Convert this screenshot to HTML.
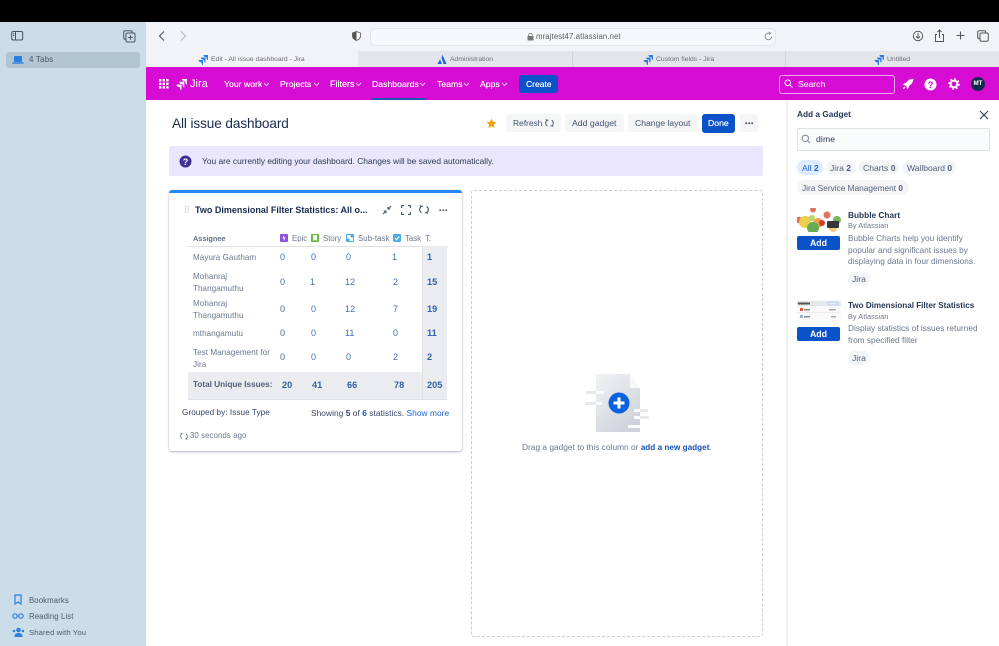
<!DOCTYPE html>
<html><head><meta charset="utf-8"><title>All issue dashboard</title>
<style>
html,body{margin:0;padding:0;background:#fff}
#r{position:relative;width:999px;height:646px;overflow:hidden;font-family:"Liberation Sans",sans-serif;background:#fff;filter:blur(.3px)}
.b,.t,svg{position:absolute}
.t{white-space:nowrap;line-height:12px;font-size:8.3px;color:#505f79}
.nav{color:#fff;font-size:8.7px;top:78px;text-shadow:0 0 .4px #fff}
.n{color:#3f6fae;font-size:9px;letter-spacing:.1px}
.nb{color:#2f62a5;font-size:9.2px;font-weight:bold}
.btn{position:absolute;background:#f4f5f7;border-radius:3px;height:18px;top:114px}
.tab{color:#6a6d75;font-size:6.8px;top:54px}
.chip{position:absolute;background:#f4f5f7;border-radius:8px;height:15px}
.p{font-size:8.300px;color:#6b778c;line-height:11.700px;letter-spacing:0}
</style></head><body><div id="r">
<div class="b" style="left:0;top:0;width:999px;height:22px;background:#000"></div>
<div class="b" style="left:0;top:22px;width:146px;height:624px;background:#cbdde9"></div>
<div class="b" style="left:146px;top:22px;width:853px;height:29px;background:#f2f3f8"></div>
<div class="b" style="left:146px;top:51px;width:212px;height:16px;background:#f2f3f8"></div>
<div class="b" style="left:358px;top:51px;width:641px;height:16px;background:#e4e5ea"></div>
<div class="b" style="left:572px;top:51px;width:1px;height:16px;background:#d3d4da"></div>
<div class="b" style="left:785px;top:51px;width:1px;height:16px;background:#d3d4da"></div>
<div class="b" style="left:146px;top:67px;width:853px;height:33px;background:#d60bd4"></div>
<div class="b" style="left:371px;top:98px;width:55px;height:2px;background:#1b55b8"></div>

<!-- sidebar -->
<svg style="left:11px;top:30px" width="13" height="12" fill="none" stroke="#4a5560" stroke-width="1"><rect x=".7" y="1.500" width="11" height="8.500" rx="1.500"/><path d="M4.500 1.500v8.500M2 3.700h1.300M2 5.500h1.300"/></svg>
<svg style="left:123px;top:30px" width="13" height="13" fill="none" stroke="#4a5560" stroke-width="1"><rect x=".7" y=".7" width="8.500" height="8.500" rx="1.500"/><rect x="3" y="3" width="9" height="9" rx="1.500" fill="#cbdde9"/><path d="M7.500 5.200v4.600M5.200 7.500h4.600"/></svg>
<div class="b" style="left:6px;top:52px;width:134px;height:16px;background:#b2c5d2;border-radius:3px"></div>
<svg style="left:12px;top:55px" width="12" height="10" fill="none"><rect x="2" y="1" width="8" height="6" rx="1" fill="#2b7de0"/><path d="M.5 8h11" stroke="#2b7de0" stroke-width="1.400"/></svg>
<div class="t" style="left:29px;top:54px;font-size:8px;color:#4e5a64;letter-spacing:.15px">4 Tabs</div>
<svg style="left:14px;top:594px" width="8" height="11" fill="none" stroke="#2b80e0" stroke-width="1.200"><path d="M1 1h6v9L4 8 1 10z"/></svg>
<svg style="left:12px;top:612px" width="12" height="8" fill="none" stroke="#2b80e0" stroke-width="1.100"><circle cx="3" cy="4" r="2.200"/><circle cx="9" cy="4" r="2.200"/><path d="M5 4h2"/></svg>
<svg style="left:12px;top:627px" width="12" height="11" fill="#2b80e0"><circle cx="6.500" cy="3" r="2.300"/><path d="M2.500 10c0-3 1.500-4 4-4s4 1 4 4z"/><circle cx="2" cy="4" r="1.300"/><circle cx="11" cy="4" r="1.300"/></svg>
<div class="t" style="left:29px;top:595px;font-size:7.800px;color:#4e5a64;letter-spacing:.1px">Bookmarks</div>
<div class="t" style="left:29px;top:611px;font-size:7.800px;color:#4e5a64;letter-spacing:.1px">Reading List</div>
<div class="t" style="left:29px;top:627px;font-size:7.700px;color:#4e5a64;letter-spacing:.1px">Shared with You</div>

<!-- toolbar -->
<svg style="left:158px;top:30px" width="8" height="12" fill="none" stroke="#4a4d55" stroke-width="1.100"><path d="M6 1.500 1.500 6 6 10.500"/></svg>
<svg style="left:179px;top:30px" width="8" height="12" fill="none" stroke="#b5b7bd" stroke-width="1.100"><path d="M2 1.500 6.500 6 2 10.500"/></svg>
<svg style="left:352px;top:31px" width="9" height="10"><path d="M4.500.5 8.500 2v3c0 2.300-2 3.700-4 4.500C2.500 8.700.5 7.300.5 5V2z" fill="#fff" stroke="#555" stroke-width=".8"/><path d="M4.500.5V9.500C2.500 8.700.5 7.300.5 5V2z" fill="#555"/></svg>
<div class="b" style="left:370px;top:28px;width:404px;height:16px;background:#f6f7fb;border:1px solid #e3e4ea;border-radius:5px"></div>
<svg style="left:527px;top:33px" width="7" height="8" fill="#777"><rect x=".5" y="3" width="6" height="4.500" rx=".6"/><path d="M1.700 3V2a1.800 1.800 0 0 1 3.600 0v1" fill="none" stroke="#777" stroke-width=".8"/></svg>
<div class="t" style="left:536px;top:31px;font-size:7.800px;color:#5c5f67;letter-spacing:.1px">mrajtest47.atlassian.net</div>
<svg style="left:764px;top:31px" width="9" height="10" fill="none" stroke="#888" stroke-width=".9"><path d="M7.700 5.500A3.300 3.300 0 1 1 4.500 2.200H6M5 .8 6.500 2.200 5 3.600"/></svg>
<svg style="left:912px;top:30px" width="12" height="12" fill="none" stroke="#555" stroke-width="1"><circle cx="6" cy="6" r="4.700"/><path d="M6 3v5M4 6.300 6 8.300 8 6.300"/></svg>
<svg style="left:934px;top:29px" width="11" height="14" fill="none" stroke="#555" stroke-width="1"><path d="M3 5.500H1.500v7h8v-7H8M5.500 9V1M3.500 3l2-2 2 2"/></svg>
<svg style="left:955px;top:30px" width="11" height="11" fill="none" stroke="#555" stroke-width="1.100"><path d="M5.500 1.500v8M1.500 5.500h8"/></svg>
<svg style="left:977px;top:30px" width="12" height="12" fill="none" stroke="#555" stroke-width="1"><rect x=".7" y=".7" width="8" height="8" rx="1.500"/><rect x="3" y="3" width="8.300" height="8.300" rx="1.500" fill="#f2f3f8"/></svg>

<!-- tabs -->
<svg style="left:198px;top:54px" width="11" height="11" fill="#2b7de8"><path d="M10 1H5.500c0 1.200 1 2.200 2.200 2.200H8.500V4c0 1.200 1 2.200 1.500 2.200zM7.500 3.500H3c0 1.200 1 2.200 2.200 2.200H6v.8c0 1.200 1 2.200 1.500 2.200zM5 6H.5c0 1.200 1 2.200 2.200 2.200h.8V9c0 1.200 1 2.200 1.500 2.200z"/></svg>
<div class="t tab" style="left:211px">Edit - All issue dashboard - Jira</div>
<svg style="left:437px;top:54px" width="10" height="11" fill="#1d62d4"><path d="M5 .5c1.500 2.500 3 6 4.500 9.500H6.500C6 8 5.500 6 4.500 4.500 5 3 5 1.500 5 .5zM3 5.500c.8 1 1.200 2.800 1.700 4.500H.5z"/></svg>
<div class="t tab" style="left:450px">Administration</div>
<svg style="left:643px;top:54px" width="11" height="11" fill="#2b7de8"><path d="M10 1H5.500c0 1.200 1 2.200 2.200 2.200H8.500V4c0 1.200 1 2.200 1.500 2.200zM7.500 3.500H3c0 1.200 1 2.200 2.200 2.200H6v.8c0 1.200 1 2.200 1.500 2.200zM5 6H.5c0 1.200 1 2.200 2.200 2.200h.8V9c0 1.200 1 2.200 1.500 2.200z"/></svg>
<div class="t tab" style="left:656px">Custom fields - Jira</div>
<svg style="left:874px;top:54px" width="11" height="11" fill="#2b7de8"><path d="M10 1H5.500c0 1.200 1 2.200 2.200 2.200H8.500V4c0 1.200 1 2.200 1.500 2.200zM7.500 3.500H3c0 1.200 1 2.200 2.200 2.200H6v.8c0 1.200 1 2.200 1.500 2.200zM5 6H.5c0 1.200 1 2.200 2.200 2.200h.8V9c0 1.200 1 2.200 1.500 2.200z"/></svg>
<div class="t tab" style="left:887px">Untitled</div>

<!-- nav -->
<svg style="left:159px;top:79px" width="10" height="10" fill="#fff"><rect width="2.400" height="2.400"/><rect x="3.600" width="2.400" height="2.400"/><rect x="7.200" width="2.400" height="2.400"/><rect y="3.600" width="2.400" height="2.400"/><rect x="3.600" y="3.600" width="2.400" height="2.400"/><rect x="7.200" y="3.600" width="2.400" height="2.400"/><rect y="7.200" width="2.400" height="2.400"/><rect x="3.600" y="7.200" width="2.400" height="2.400"/><rect x="7.200" y="7.200" width="2.400" height="2.400"/></svg>
<svg style="left:176px;top:78px" width="12" height="12" fill="#fff"><path d="M11 1H6c0 1.300 1 2.400 2.400 2.400h1V4.300c0 1.300 1 2.400 1.600 2.400zM8.300 3.800H3.300c0 1.300 1 2.400 2.400 2.400h1v.9c0 1.300 1 2.400 1.600 2.400zM5.500 6.600H.5c0 1.300 1 2.400 2.400 2.400h1v.9c0 1.300 1 2.400 1.600 2.400z"/></svg>
<div class="t" style="left:190px;top:77px;font-size:11px;color:#fff;line-height:14px">Jira</div>
<div class="t nav" style="left:224px">Your work</div>
<div class="t nav" style="left:280px">Projects</div>
<div class="t nav" style="left:330px;font-size:9px">Filters</div>
<div class="t nav" style="left:372px">Dashboards</div>
<div class="t nav" style="left:437px">Teams</div>
<div class="t nav" style="left:480px">Apps</div>
<svg style="left:263px;top:82px" width="7" height="5" fill="none" stroke="#f6c8f5" stroke-width="1"><path d="M1 1l2.500 2.500L6 1"/></svg>
<svg style="left:313px;top:82px" width="7" height="5" fill="none" stroke="#f6c8f5" stroke-width="1"><path d="M1 1l2.500 2.500L6 1"/></svg>
<svg style="left:355px;top:82px" width="7" height="5" fill="none" stroke="#f6c8f5" stroke-width="1"><path d="M1 1l2.500 2.500L6 1"/></svg>
<svg style="left:419px;top:82px" width="7" height="5" fill="none" stroke="#f6c8f5" stroke-width="1"><path d="M1 1l2.500 2.500L6 1"/></svg>
<svg style="left:463px;top:82px" width="7" height="5" fill="none" stroke="#f6c8f5" stroke-width="1"><path d="M1 1l2.500 2.500L6 1"/></svg>
<svg style="left:501px;top:82px" width="7" height="5" fill="none" stroke="#f6c8f5" stroke-width="1"><path d="M1 1l2.500 2.500L6 1"/></svg>
<div class="b" style="left:519px;top:75px;width:39px;height:18px;background:#0b52c9;border-radius:3px"></div>
<div class="t nav" style="left:526px;top:78px;font-size:8.500px">Create</div>
<div class="b" style="left:779px;top:75px;width:114px;height:17px;border:1px solid #f2a6f0;border-radius:3px"></div>
<svg style="left:784px;top:79px" width="9" height="9" fill="none" stroke="#fff" stroke-width="1"><circle cx="3.800" cy="3.800" r="2.800"/><path d="M6 6l2.500 2.500"/></svg>
<div class="t" style="left:798px;top:78px;color:#fbe3fb;font-size:8.600px;text-shadow:0 0 .3px #fff">Search</div>
<svg style="left:902px;top:78px" width="12" height="12" fill="#fff"><path d="M11.500.8C8 .8 5.500 2.500 4 5L2 5.500 1 7l2.200.3 1.500 1.500.3 2.200 1.500-1L7 8c2.500-1.500 4.300-4 4.500-7.200zM2.500 8.500C1.500 9 1 10 1 11c1 0 2-.5 2.500-1.500z"/></svg>
<svg style="left:924px;top:78px" width="13" height="13"><circle cx="6.500" cy="6.500" r="6" fill="#fff"/><text x="6.500" y="10" font-family="Liberation Sans" font-size="9.500" font-weight="bold" text-anchor="middle" fill="#d60bd4">?</text></svg>
<svg style="left:948px;top:78px" width="12" height="12" fill="none" stroke="#fff"><circle cx="6" cy="6" r="3.400" stroke-width="2"/><circle cx="6" cy="6" r="5" stroke-width="1.600" stroke-dasharray="1.800 2.120"/></svg>
<div class="b" style="left:971px;top:77px;width:14px;height:14px;border-radius:50%;background:#122b4d"></div>
<div class="t" style="left:971px;top:78px;width:14px;text-align:center;color:#fff;font-size:6.200px;font-weight:bold">MT</div>

<!-- page head -->
<div class="t" style="left:172px;top:115px;font-size:13.600px;line-height:18px;color:#172b4d;letter-spacing:-.1px">All issue dashboard</div>
<svg style="left:486px;top:118px" width="11" height="11" fill="#f6a30f"><path d="M5.500.5l1.500 3.200 3.500.4-2.600 2.400.7 3.500-3.100-1.800L2.400 10l.7-3.500L.5 4.100 4 3.700z"/></svg>
<div class="btn" style="left:506px;width:55px"></div>
<div class="t" style="left:513px;top:117px;font-size:8.400px;color:#42526e">Refresh</div>
<svg style="left:545px;top:118px" width="9" height="10" fill="none" stroke="#42526e" stroke-width=".9"><path d="M1.800 2.400C1 3.100.7 4 .7 5c0 1.200.6 2.200 1.600 2.800M.9 1.300 2 2.500l1.400-.7M7.200 7.600C8 6.900 8.300 6 8.300 5c0-1.200-.6-2.200-1.600-2.800M8.100 8.700 7 7.500l-1.400.7"/></svg>
<div class="btn" style="left:565px;width:59px"></div>
<div class="t" style="left:572px;top:117px;font-size:8.700px;color:#42526e">Add gadget</div>
<div class="btn" style="left:628px;width:69px"></div>
<div class="t" style="left:635px;top:117px;font-size:8.600px;color:#42526e">Change layout</div>
<div class="btn" style="left:702px;width:33px;background:#0b52c9;height:19px"></div>
<div class="t" style="left:708px;top:117px;font-size:8.700px;color:#fff;text-shadow:0 0 .4px #fff">Done</div>
<div class="btn" style="left:740px;width:18px"></div>
<svg style="left:745px;top:122px" width="9" height="3" fill="#42526e"><circle cx="1.200" cy="1.200" r="1"/><circle cx="4.200" cy="1.200" r="1"/><circle cx="7.200" cy="1.200" r="1"/></svg>

<!-- banner -->
<div class="b" style="left:169px;top:146px;width:594px;height:30px;background:#eae6fd;border-radius:2px"></div>
<svg style="left:179px;top:155px" width="13" height="13"><circle cx="6.500" cy="6.500" r="6" fill="#403294"/><text x="6.500" y="9.800" font-family="Liberation Sans" font-size="9" font-weight="bold" text-anchor="middle" fill="#fff">?</text></svg>
<div class="t" style="left:202px;top:155px;font-size:8.400px;color:#2d3a55">You are currently editing your dashboard. Changes will be saved automatically.</div>

<!-- gadget card -->
<div class="b" style="left:169px;top:190px;width:293px;height:261px;background:#fff;border-radius:3px;box-shadow:0 1px 2px rgba(9,30,66,.3),0 0 1px rgba(9,30,66,.25)"></div>
<div class="b" style="left:169px;top:190px;width:293px;height:3px;background:#2684ff;border-radius:3px 3px 0 0"></div>
<svg style="left:185px;top:206px" width="4" height="8" fill="#c1c7d0"><rect width="1.300" height="1.300"/><rect x="2.500" width="1.300" height="1.300"/><rect y="2.600" width="1.300" height="1.300"/><rect x="2.500" y="2.600" width="1.300" height="1.300"/><rect y="5.200" width="1.300" height="1.300"/><rect x="2.500" y="5.200" width="1.300" height="1.300"/></svg>
<div class="t" style="left:195px;top:204px;font-size:9px;font-weight:bold;color:#172b4d">Two Dimensional Filter Statistics: All o...</div>
<svg style="left:382px;top:205px" width="10" height="10" fill="none" stroke="#42526e" stroke-width="1"><path d="M9 1 6 4M6 1.800V4h2.200M1 9l3-3M4 8.200V6H1.800"/></svg>
<svg style="left:401px;top:205px" width="10" height="10" fill="none" stroke="#42526e" stroke-width="1.100"><path d="M.6 3V.6H3M7 .6h2.400V3M9.400 7v2.400H7M3 9.400H.6V7"/></svg>
<svg style="left:419px;top:204px" width="10" height="11" fill="none" stroke="#42526e" stroke-width="1.100"><path d="M2 2.700C1 3.400.7 4.400.7 5.500c0 1.300.7 2.400 1.800 3.100M1 1.300 2.200 2.700l1.600-.8M8 8.300C9 7.600 9.300 6.600 9.300 5.500c0-1.300-.7-2.400-1.800-3.100M9 9.700 7.800 8.300l-1.600.8"/></svg>
<svg style="left:439px;top:209px" width="9" height="3" fill="#42526e"><circle cx="1.200" cy="1.200" r=".9"/><circle cx="4.200" cy="1.200" r=".9"/><circle cx="7.200" cy="1.200" r=".9"/></svg>

<!-- table -->
<div class="t" style="left:193px;top:233px;font-size:7.300px;font-weight:bold;color:#5e6c84">Assignee</div>
<div class="b" style="left:280px;top:234px;width:8px;height:8px;background:#904ee2;border-radius:1px"></div>
<svg style="left:282px;top:235px" width="4" height="6" fill="#fff"><path d="M2.300 0 .3 3.200h1.400L1.500 6l2.200-3.400H2.200z"/></svg>
<div class="t" style="left:292px;top:233px;font-size:7.800px;color:#6b778c">Epic</div>
<div class="b" style="left:311px;top:234px;width:8px;height:8px;background:#63ba3c;border-radius:1px"></div>
<svg style="left:313px;top:235px" width="4" height="6" fill="#fff"><path d="M0 0h4v6L2 4.500 0 6z"/></svg>
<div class="t" style="left:323px;top:233px;font-size:7.800px;color:#6b778c">Story</div>
<div class="b" style="left:346px;top:234px;width:8px;height:8px;background:#4bade8;border-radius:1px"></div>
<svg style="left:347px;top:235px" width="6" height="6" fill="#fff"><rect width="3.500" height="3.500"/><rect x="2.500" y="2.500" width="3.500" height="3.500"/></svg>
<div class="t" style="left:358px;top:233px;font-size:7.800px;color:#6b778c;letter-spacing:.1px">Sub-task</div>
<div class="b" style="left:393px;top:234px;width:8px;height:8px;background:#4bade8;border-radius:1px"></div>
<svg style="left:393px;top:234px" width="8" height="8" fill="none" stroke="#fff" stroke-width="1.200"><path d="M2 4.200l1.500 1.500L6.200 2.500"/></svg>
<div class="t" style="left:405px;top:233px;font-size:7.800px;color:#6b778c">Task</div>
<div class="t" style="left:425px;top:233px;font-size:7.800px;color:#6b778c">T:</div>
<div class="b" style="left:187px;top:246px;width:261px;height:1px;background:#dfe1e6"></div>
<div class="b" style="left:422px;top:246px;width:25px;height:154px;background:#ebecf0"></div>
<div class="b" style="left:188px;top:372px;width:259px;height:28px;background:#ebecf0"></div>
<div class="b" style="left:188px;top:399px;width:259px;height:1px;background:#dfe1e6"></div>
<div class="b" style="left:422px;top:246px;width:1px;height:154px;background:#dfe1e6"></div>

<div class="t" style="left:193px;top:251.500px;font-size:8.100px;color:#6b778c;letter-spacing:.05px">Mayura Gautham</div>
<div class="t n" style="left:280px;top:251px">0</div><div class="t n" style="left:311px;top:251px">0</div><div class="t n" style="left:346px;top:251px">0</div><div class="t n" style="left:392px;top:251px">1</div><div class="t nb" style="left:427px;top:251px">1</div>

<div class="t" style="left:193px;top:270.500px;font-size:8.100px;color:#6b778c;line-height:12px;letter-spacing:.05px">Mohanraj<br>Thangamuthu</div>
<div class="t n" style="left:280px;top:276px">0</div><div class="t n" style="left:310px;top:276px">1</div><div class="t n" style="left:345px;top:276px">12</div><div class="t n" style="left:393px;top:276px">2</div><div class="t nb" style="left:427px;top:276px">15</div>

<div class="t" style="left:193px;top:297.500px;font-size:8.100px;color:#6b778c;line-height:12px;letter-spacing:.05px">Mohanraj<br>Thangamuthu</div>
<div class="t n" style="left:280px;top:303px">0</div><div class="t n" style="left:311px;top:303px">0</div><div class="t n" style="left:345px;top:303px">12</div><div class="t n" style="left:393px;top:303px">7</div><div class="t nb" style="left:427px;top:303px">19</div>

<div class="t" style="left:193px;top:327.500px;font-size:8.100px;color:#6b778c;letter-spacing:.05px">mthangamutu</div>
<div class="t n" style="left:280px;top:327px">0</div><div class="t n" style="left:311px;top:327px">0</div><div class="t n" style="left:345px;top:327px">11</div><div class="t n" style="left:393px;top:327px">0</div><div class="t nb" style="left:427px;top:327px">11</div>

<div class="t" style="left:193px;top:346.500px;font-size:8.100px;color:#6b778c;line-height:12px;letter-spacing:.05px">Test Management for<br>Jira</div>
<div class="t n" style="left:280px;top:351px">0</div><div class="t n" style="left:311px;top:351px">0</div><div class="t n" style="left:346px;top:351px">0</div><div class="t n" style="left:393px;top:351px">2</div><div class="t nb" style="left:427px;top:351px">2</div>

<div class="t" style="left:193px;top:379px;font-size:8.200px;font-weight:bold;color:#505f79">Total Unique Issues:</div>
<div class="t nb" style="left:282px;top:379px">20</div><div class="t nb" style="left:312px;top:379px">41</div><div class="t nb" style="left:347px;top:379px">66</div><div class="t nb" style="left:394px;top:379px">78</div><div class="t nb" style="left:427px;top:379px">205</div>

<div class="t" style="left:182px;top:407px;font-size:8.200px;color:#344563;letter-spacing:.05px">Grouped by: Issue Type</div>
<div class="t" style="left:311px;top:407px;font-size:8.350px;color:#344563;letter-spacing:.05px">Showing <b>5</b> of <b style="color:#0b52c9">6</b> statistics. <span style="color:#1763d0">Show more</span></div>
<svg style="left:180px;top:432px" width="8" height="9" fill="none" stroke="#6b778c" stroke-width=".9"><path d="M1.500 2C.8 2.600.6 3.300.6 4.200c0 1 .5 1.800 1.300 2.300M.7 1 1.700 2l1.200-.6M6.500 6.500c.7-.6.9-1.300.9-2.200 0-1-.5-1.800-1.300-2.300M7.300 7.500l-1-1-1.200.6"/></svg>
<div class="t" style="left:190px;top:430px;font-size:7.800px;color:#6b778c;letter-spacing:.1px">30 seconds ago</div>

<!-- drop column -->
<div class="b" style="left:471px;top:190px;width:290px;height:445px;border:1px dashed #c9ccd4;border-radius:3px"></div>
<svg style="left:584px;top:373px" width="68" height="60">
<defs><linearGradient id="g" x1="0" y1="0" x2=".7" y2="1"><stop offset="0" stop-color="#f1f2f5"/><stop offset="1" stop-color="#cfd2db"/></linearGradient></defs>
<path d="M12 1H46L56 15V59H12z" fill="url(#g)"/><path d="M46 1 56 15H46z" fill="#f7f8fa"/>
<rect x="2" y="18" width="10" height="3" fill="#e6e8ed"/><rect x="12" y="18" width="8" height="3" fill="#fafbfc"/>
<rect x="1" y="29" width="11" height="3" fill="#e6e8ed"/><rect x="12" y="29" width="6" height="3" fill="#fafbfc"/>
<rect x="56" y="36" width="8" height="3" fill="#e6e8ed"/><rect x="50" y="36" width="6" height="3" fill="#fafbfc"/>
<rect x="56" y="43" width="9" height="3" fill="#e6e8ed"/><rect x="50" y="43" width="6" height="3" fill="#fafbfc"/>
<rect x="44" y="52" width="12" height="3" fill="#fafbfc"/>
<circle cx="35" cy="30" r="10.500" fill="#0b62dd"/><path d="M35 24.500v11M29.500 30h11" stroke="#fff" stroke-width="3"/></svg>
<div class="t" style="left:522px;top:441px;font-size:8.350px;color:#6b778c">Drag a gadget to this column or <span style="color:#1652b5;font-weight:bold;font-size:8.200px">add a new gadget</span>.</div>

<!-- panel -->
<div class="b" style="left:786px;top:100px;width:2px;height:546px;background:#efeff2"></div>
<div class="t" style="left:797px;top:108px;font-size:8.300px;font-weight:bold;color:#253858">Add a Gadget</div>
<svg style="left:979px;top:110px" width="10" height="10" fill="none" stroke="#344563" stroke-width="1.200"><path d="M1 1l8 8M9 1 1 9"/></svg>
<div class="b" style="left:797px;top:128px;width:191px;height:21px;background:#fafbfc;border:1px solid #dfe1e6;border-radius:2px"></div>
<svg style="left:801px;top:134px" width="10" height="10" fill="none" stroke="#7a869a" stroke-width="1"><circle cx="4.300" cy="4.300" r="3.200"/><path d="M6.700 6.700 9.200 9.200"/></svg>
<div class="t" style="left:816px;top:133px;font-size:8.700px;color:#253858;letter-spacing:.1px">dime</div>
<div class="chip" style="left:797px;top:160px;width:26px;background:#deebff"></div>
<div class="t" style="left:802px;top:162px;font-size:8.600px;color:#1763d0">All <b>2</b></div>
<div class="chip" style="left:826px;top:160px;width:30px"></div>
<div class="t" style="left:830px;top:162px;font-size:8.600px;color:#505f79">Jira <b>2</b></div>
<div class="chip" style="left:858px;top:160px;width:41px"></div>
<div class="t" style="left:863px;top:162px;font-size:8.600px;color:#505f79">Charts <b>0</b></div>
<div class="chip" style="left:902px;top:160px;width:54px"></div>
<div class="t" style="left:907px;top:162px;font-size:8.500px;color:#505f79">Wallboard <b>0</b></div>
<div class="chip" style="left:797px;top:180px;width:112px"></div>
<div class="t" style="left:802px;top:182px;font-size:8.300px;color:#505f79">Jira Service Management <b>0</b></div>

<svg style="left:797px;top:208px" width="44" height="24">
<rect width="44" height="24" fill="#fff"/>
<circle cx="16" cy="1.500" r="3" fill="#e0735f"/><circle cx="30" cy="7" r="3.500" fill="#e0735f"/>
<circle cx="2" cy="12" r="3.200" fill="#dd6b58"/><circle cx="8" cy="14" r="6" fill="#f1cf4e"/><circle cx="15" cy="10" r="3" fill="#bcd56c"/>
<circle cx="21" cy="15" r="5" fill="#eda24c"/><circle cx="16" cy="20" r="6" fill="#66ad52"/><circle cx="25" cy="15" r="3" fill="#cf3d2e"/>
<circle cx="40" cy="12" r="4" fill="#7cb45f"/><circle cx="36" cy="20" r="4" fill="#f1c97f"/><rect x="30" y="13" width="12" height="7" rx="1" fill="#33363b"/></svg>
<div class="b" style="left:797px;top:236px;width:43px;height:14px;background:#0b52c9;border-radius:2px"></div>
<div class="t" style="left:797px;top:237px;width:43px;text-align:center;font-size:8.800px;font-weight:bold;color:#fff">Add</div>
<div class="t" style="left:848px;top:209px;font-size:8.300px;font-weight:bold;color:#253858">Bubble Chart</div>
<div class="t" style="left:848px;top:220px;font-size:7.300px;color:#6b778c;letter-spacing:.05px">By Atlassian</div>
<div class="t p" style="left:848px;top:233px">Bubble Charts help you identify<br>popular and significant issues by<br>displaying data in four dimensions.</div>
<div class="chip" style="left:848px;top:272px;width:22px;height:14px"></div>
<div class="t" style="left:852px;top:273px;font-size:8.600px;color:#505f79">Jira</div>

<svg style="left:797px;top:300px" width="44" height="21">
<rect width="44" height="21" fill="#fafafa"/><rect y="1" width="44" height="5" fill="#e5e6e8"/>
<rect x="1" y="2.500" width="12" height="2" fill="#555"/><rect x="31" y="2" width="10" height="3" fill="#dfe8f5" stroke="#9fb7d8" stroke-width=".4"/>
<rect x="3" y="8" width="3" height="3" fill="#e5563f"/><rect x="7" y="9" width="6" height="1.500" fill="#888"/><rect x="32" y="9" width="7" height="1.500" fill="#aaa"/>
<rect y="12.500" width="44" height=".5" fill="#ddd"/>
<rect x="3" y="15" width="3" height="3" fill="#9eb4cc"/><rect x="7" y="16" width="6" height="1.500" fill="#888"/><rect x="34" y="16" width="5" height="1.500" fill="#aaa"/></svg>
<div class="b" style="left:797px;top:327px;width:43px;height:14px;background:#0b52c9;border-radius:2px"></div>
<div class="t" style="left:797px;top:328px;width:43px;text-align:center;font-size:8.800px;font-weight:bold;color:#fff">Add</div>
<div class="t" style="left:848px;top:300px;font-size:8.100px;font-weight:bold;color:#253858">Two Dimensional Filter Statistics</div>
<div class="t" style="left:848px;top:311px;font-size:7.300px;color:#6b778c;letter-spacing:.05px">By Atlassian</div>
<div class="t p" style="left:848px;top:323px">Display statistics of issues returned<br>from specified filter</div>
<div class="chip" style="left:848px;top:351px;width:22px;height:14px"></div>
<div class="t" style="left:852px;top:352px;font-size:8.600px;color:#505f79">Jira</div>
</div></body></html>
